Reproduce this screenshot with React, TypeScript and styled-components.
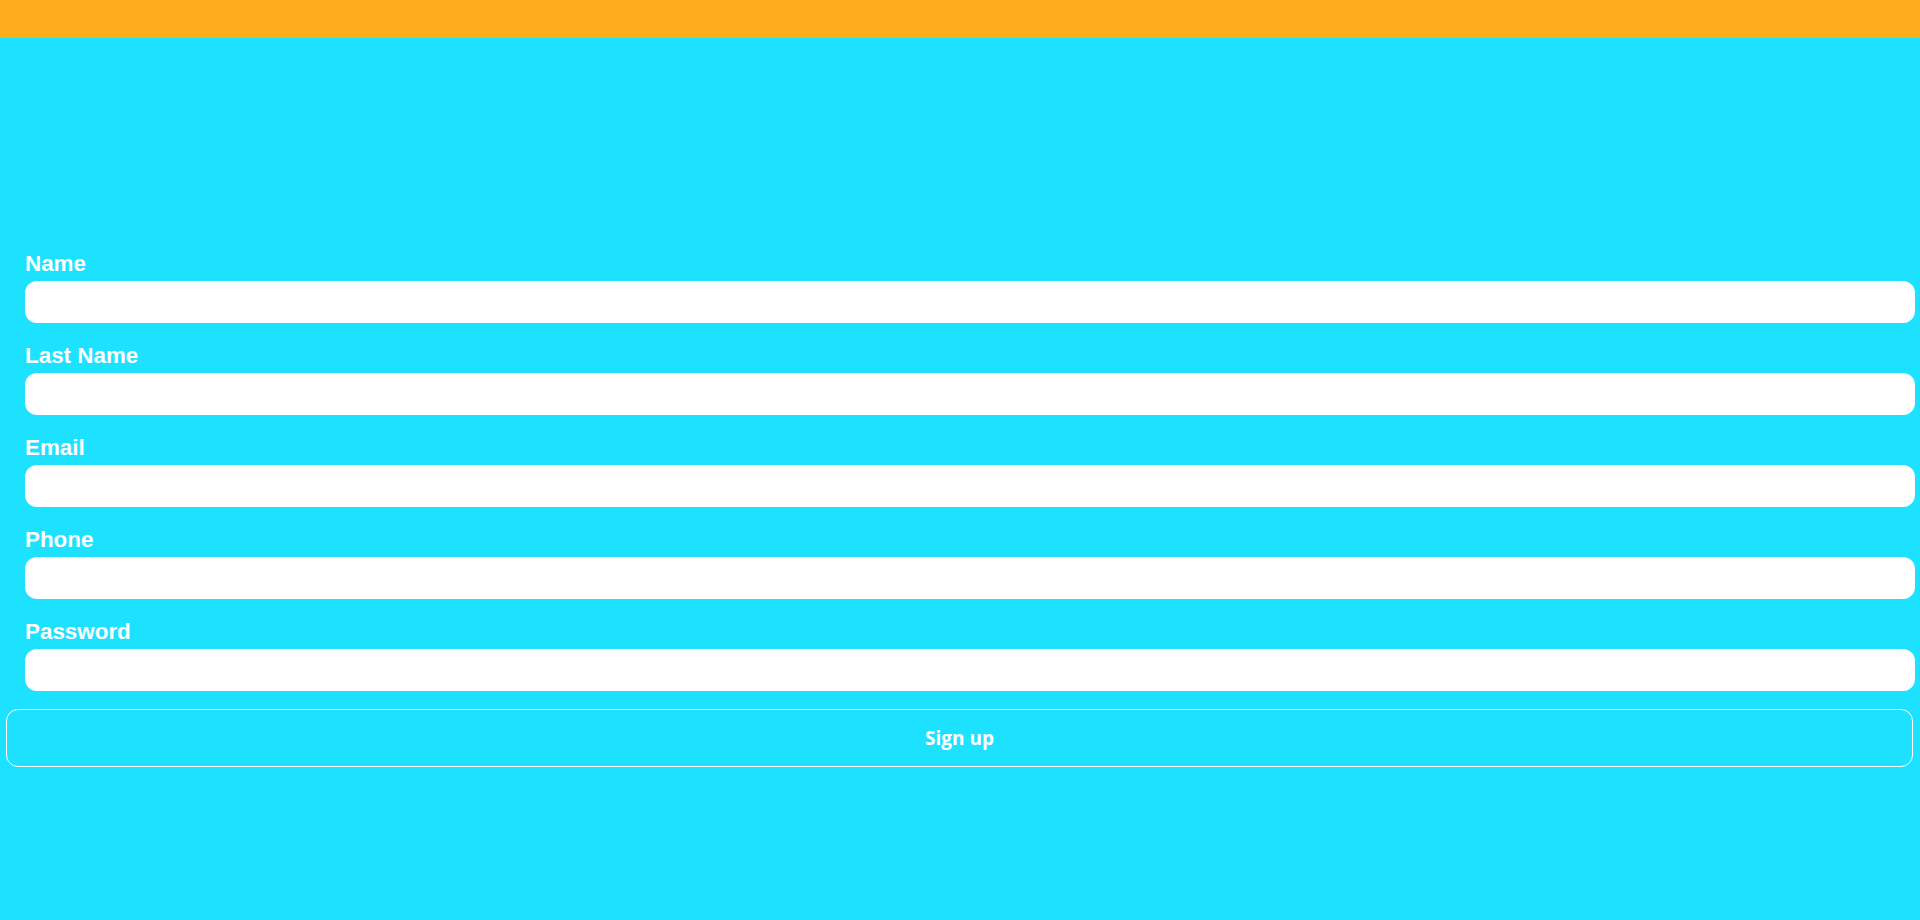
import styled, { createGlobalStyle } from "styled-components";

const GlobalStyle = createGlobalStyle`
  html, body {
    margin: 0;
    padding: 0;
    background-color: #1de2ff;
  }
  * {
    box-sizing: border-box;
  }
`;

const Page = styled.div`
  min-height: 100vh;
  background-color: #1de2ff;
  display: flex;
  flex-direction: column;
`;

const TopBar = styled.header`
  height: 38px;
  background-color: #ffae1d;
`;

const Form = styled.form`
  display: flex;
  flex-direction: column;
  padding-top: 213px;
`;

const Fields = styled.div`
  display: flex;
  flex-direction: column;
  gap: 20px;
  padding: 0 5px 0 25px;
`;

const Field = styled.div`
  display: flex;
  flex-direction: column;
  gap: 4px;
`;

const Label = styled.label`
  font-family: "Liberation Sans", Arial, sans-serif;
  font-weight: bold;
  font-size: 22.4px;
  line-height: 26px;
  color: #fff;
`;

const Input = styled.input`
  height: 42px;
  width: 100%;
  border: none;
  border-radius: 12px;
  background-color: #fff;
  padding: 0 12px;
  font-size: 18px;
  outline: none;
`;

const SubmitButton = styled.button`
  margin: 18px 7px 0 6px;
  height: 58px;
  border: 1.5px solid #fff;
  border-radius: 12px;
  background-color: transparent;
  color: #fff;
  font-family: "Open Sans", "Noto Sans", sans-serif;
  font-weight: 700;
  font-size: 19px;
  cursor: pointer;
`;

const fields = [
  { id: "name", label: "Name", type: "text" },
  { id: "lastName", label: "Last Name", type: "text" },
  { id: "email", label: "Email", type: "email" },
  { id: "phone", label: "Phone", type: "tel" },
  { id: "password", label: "Password", type: "password" },
];

export default function App() {
  return (
    <>
      <GlobalStyle />
      <Page>
        <TopBar />
        <Form onSubmit={(e) => e.preventDefault()}>
          <Fields>
            {fields.map((f) => (
              <Field key={f.id}>
                <Label htmlFor={f.id}>{f.label}</Label>
                <Input id={f.id} type={f.type} />
              </Field>
            ))}
          </Fields>
          <SubmitButton type="submit">Sign up</SubmitButton>
        </Form>
      </Page>
    </>
  );
}
